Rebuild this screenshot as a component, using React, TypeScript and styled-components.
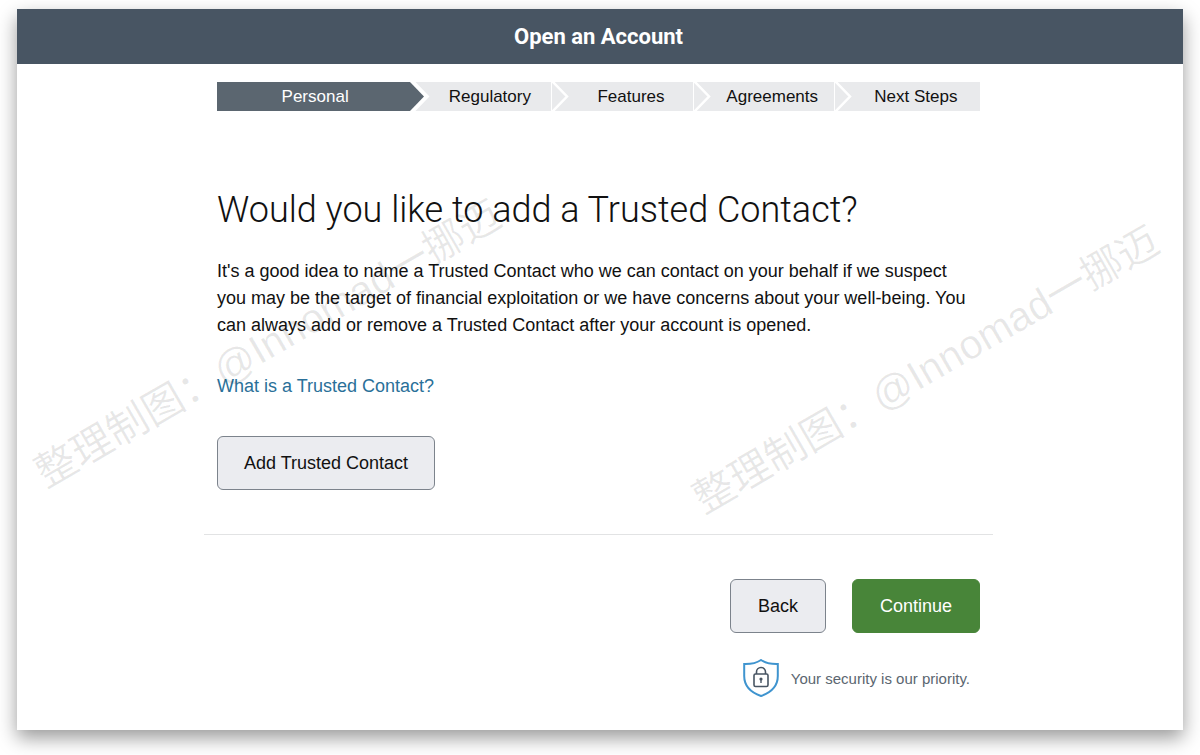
import React from "react";
import styled, { createGlobalStyle } from "styled-components";

const GlobalStyle = createGlobalStyle`
  *, *::before, *::after { box-sizing: border-box; }
  body {
    margin: 0;
    background: #fff;
    color: #111;
    font-family: "Liberation Sans", Arial, sans-serif;
    font-size: 18px;
  }
`;

const Page = styled.div`
  padding: 9px 17px 25px;
  overflow: hidden;
`;

const Panel = styled.div`
  position: relative;
  min-height: calc(100vh - 34px);
  background: #fff;
  box-shadow: 0 8px 18px rgba(0, 0, 0, 0.4);
`;

const TopBar = styled.header`
  display: flex;
  align-items: center;
  justify-content: center;
  height: 55px;
  padding-right: 3px;
  background: #485563;
`;

const BarTitle = styled.p`
  margin: 0;
  color: #fff;
  font-family: Roboto, sans-serif;
  font-size: 22px;
  font-weight: 700;
`;

const Body = styled.div`
  width: 100%;
  padding: 18px 3px 30px 0;
`;

const Column = styled.div`
  max-width: 789px;
  margin: 0 auto;
`;

const Steps = styled.ol`
  display: grid;
  grid-template-columns: 193fr 141fr 141fr 141fr 146fr;
  margin: 0 13px;
  padding: 0;
  list-style: none;
`;

const Step = styled.li<{ $active?: boolean }>`
  position: relative;
  display: flex;
  align-items: center;
  justify-content: center;
  height: 29px;
  padding-left: ${(p) => (p.$active ? "3px" : "17px")};
  border-left: ${(p) => (p.$active ? "none" : "1px solid #fff")};
  background: ${(p) => (p.$active ? "#5b6670" : "#e9eaec")};
  color: ${(p) => (p.$active ? "#fff" : "#111")};
  font-size: 17px;
`;

const Chevron = styled.svg`
  position: absolute;
  top: 0;
  left: -1px;
`;

const Question = styled.main`
  padding: 75px 13px 44px;
`;

const Heading = styled.h1`
  margin: 0 0 24px;
  font-family: Roboto, sans-serif;
  font-size: 36px;
  font-weight: 300;
  line-height: 48px;
`;

const Copy = styled.p`
  margin: 0 0 34px;
  padding-right: 4px;
  line-height: 27px;
`;

const HelpLink = styled.a`
  display: block;
  width: fit-content;
  margin-bottom: 36px;
  color: #2a7099;
  line-height: 27px;
  text-decoration: none;
`;

const Button = styled.button<{ $compact?: boolean; $primary?: boolean }>`
  height: 54px;
  padding: 0 ${(p) => (p.$compact ? "27px" : "26px")};
  border: 1px solid ${(p) => (p.$primary ? "#488539" : "#7c838c")};
  border-radius: 6px;
  background: ${(p) => (p.$primary ? "#488539" : "#ebecf0")};
  color: ${(p) => (p.$primary ? "#fff" : "#111")};
  font: inherit;
  cursor: pointer;
`;

const Footer = styled.footer`
  display: flex;
  flex-direction: column;
  align-items: flex-end;
  padding: 44px 13px 0;
  border-top: 1px solid #e2e3e4;
`;

const Actions = styled.div`
  display: flex;
  gap: 26px;
`;

const Security = styled.p`
  display: flex;
  align-items: center;
  gap: 12px;
  margin: 26px 10px 0 0;
  color: #5b6670;
  font-size: 15px;
`;

const Watermark = styled.span<{ $x: string; $y: string }>`
  position: absolute;
  top: ${(p) => p.$y};
  left: ${(p) => p.$x};
  transform: translate(-50%, -50%) rotate(-30deg);
  color: rgba(0, 0, 0, 0.09);
  font-family: "Liberation Sans", "Noto Sans CJK SC", sans-serif;
  font-size: 41px;
  line-height: 60px;
  white-space: nowrap;
  pointer-events: none;
`;

const steps = ["Personal", "Regulatory", "Features", "Agreements", "Next Steps"];
const credit = "整理制图：@Innomad一挪迈";

function StepChevron({ filled }: { filled: boolean }) {
  return (
    <Chevron width="20" height="29" viewBox="0 0 20 29" aria-hidden="true">
      <path
        d="M1 -1 L16 14.500 L1 30"
        fill="none"
        stroke="#fff"
        strokeWidth={filled ? 5 : 2.5}
      />
      {filled && <path d="M0 0 L14 14.500 L0 29 Z" fill="#5b6670" />}
    </Chevron>
  );
}

function SecurityBadge() {
  return (
    <svg width="36" height="38" viewBox="0 0 36 38" fill="none" aria-hidden="true">
      <path
        d="M18 1 C13.500 4 7.500 5.200 1.200 5 V17 C1.200 27.500 8 33.500 18 37 C28 33.500 34.800 27.500 34.800 17 V5 C28.500 5.200 22.500 4 18 1 Z"
        stroke="#3f94cf"
        strokeWidth="2"
      />
      <rect x="11" y="15" width="14" height="12.500" rx="1.500" stroke="#485563" strokeWidth="1.600" />
      <path d="M13.500 15 V13 A4.500 4.500 0 0 1 22.500 13 V15" stroke="#485563" strokeWidth="1.600" />
      <circle cx="18" cy="20" r="1.600" fill="#485563" />
      <path d="M18 20 V24" stroke="#485563" strokeWidth="1.400" />
    </svg>
  );
}

export default function App() {
  return (
    <Page>
      <GlobalStyle />
      <Panel>
        <TopBar>
          <BarTitle>Open an Account</BarTitle>
        </TopBar>
        <Body>
          <Column>
            <Steps>
              {steps.map((name, i) => (
                <Step key={name} $active={i === 0} aria-current={i === 0 ? "step" : undefined}>
                  {i > 0 && <StepChevron filled={i === 1} />}
                  {name}
                </Step>
              ))}
            </Steps>
            <Question>
              <Heading>Would you like to add a Trusted Contact?</Heading>
              <Copy>
                It's a good idea to name a Trusted Contact who we can contact on your behalf if we
                suspect you may be the target of financial exploitation or we have concerns about
                your well-being. You can always add or remove a Trusted Contact after your account
                is opened.
              </Copy>
              <HelpLink href="#trusted-contact">What is a Trusted Contact?</HelpLink>
              <Button type="button">Add Trusted Contact</Button>
            </Question>
            <Footer>
              <Actions>
                <Button type="button" $compact>
                  Back
                </Button>
                <Button type="button" $compact $primary>
                  Continue
                </Button>
              </Actions>
              <Security>
                <SecurityBadge />
                Your security is our priority.
              </Security>
            </Footer>
          </Column>
        </Body>
        <Watermark $x="21.5%" $y="46.5%">{credit}</Watermark>
        <Watermark $x="78%" $y="50%">{credit}</Watermark>
      </Panel>
    </Page>
  );
}
